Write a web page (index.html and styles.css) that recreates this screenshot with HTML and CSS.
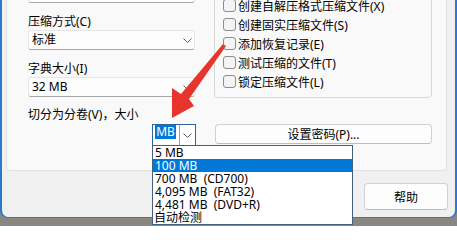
FILE: index.html
```html
<!DOCTYPE html>
<html lang="zh-CN">
<head>
<meta charset="utf-8">
<title>压缩选项</title>
<link rel="stylesheet" href="styles.css">
</head>
<body>
<div class="screen">
  <div class="window">
    <div class="panel">
      <div class="cols">
        <div class="left">
          <div class="field"></div>
          <div class="label">压缩方式(C)</div>
          <div class="field"><span class="val">标准</span><svg class="chev" width="9" height="5" viewBox="0 0 9 5"><path d="M0.5 0.5 L4.5 4.5 L8.5 0.5" fill="none" stroke="#5f5f5f" stroke-width="1"/></svg></div>
          <div class="label">字典大小(I)</div>
          <div class="field"><span class="val">32 MB</span><svg class="chev" width="9" height="5" viewBox="0 0 9 5"><path d="M0.5 0.5 L4.5 4.5 L8.5 0.5" fill="none" stroke="#5f5f5f" stroke-width="1"/></svg></div>
        </div>
        <div class="group">
          <div class="check"><span class="box"></span>创建自解压格式压缩文件(X)</div>
          <div class="check"><span class="box"></span>创建固实压缩文件(S)</div>
          <div class="check"><span class="box"></span>添加恢复记录(E)</div>
          <div class="check"><span class="box"></span>测试压缩的文件(T)</div>
          <div class="check"><span class="box"></span>锁定压缩文件(L)</div>
        </div>
      </div>
      <div class="label split">切分为分卷(V)，大小</div>
      <div class="row">
        <div class="combo">
          <span class="sel">MB</span>
          <span class="drop"><svg width="9" height="5" viewBox="0 0 9 5"><path d="M0.5 0.5 L4.5 4.5 L8.5 0.5" fill="none" stroke="#555" stroke-width="1"/></svg></span>
        </div>
        <div class="btn pwd">设置密码(P)...</div>
      </div>
    </div>
    <div class="footer">
      <div class="btn help">帮助</div>
    </div>
  </div>
  <ul class="list">
    <li>5 MB</li>
    <li class="hl">100 MB</li>
    <li>700 MB  (CD700)</li>
    <li>4,095 MB  (FAT32)</li>
    <li>4,481 MB  (DVD+R)</li>
    <li class="auto">自动检测</li>
  </ul>
  <svg class="arrow" width="457" height="226" viewBox="0 0 457 226">
    <polygon points="223,44 226,46 189,99 194,106 172,118 172,88 181,94" fill="#e6352d"/>
  </svg>
</div>
</body>
</html>
```
FILE: styles.css
```css
* { box-sizing: border-box; }
html, body { margin: 0; padding: 0; }
body {
  font-family: "Noto Sans", "Noto Sans CJK SC", sans-serif;
  font-size: 12px;
  color: #000;
}
.screen {
  position: relative;
  width: 457px;
  height: 226px;
  overflow: hidden;
  background: #8a8682;
}
.window {
  display: flex;
  flex-direction: column;
  width: 457px;
  background: #f0f0f0;
  border-left: 2px solid #2a78d0;
  border-right: 2px solid #2a78d0;
  border-bottom: 1px solid #2a78d0;
  border-radius: 0 0 8px 8px;
}
.panel {
  margin: -20px 0 0 4px;
  width: 441px;
  padding: 2px 0 24px 21px;
  background: #f9f9f9;
  border: 1px solid #e0e0e0;
  border-radius: 0 0 4px 4px;
}
.cols {
  display: grid;
  grid-template-columns: 167px 218px;
  column-gap: 19px;
  align-items: start;
}
.label {
  margin-top: 10px;
  line-height: 17px;
  height: 17px;
  white-space: nowrap;
}
.field {
  display: flex;
  align-items: center;
  height: 20px;
  padding: 0 2px 0 3px;
  background: #fdfdfd;
  border: 1px solid #e6e6e6;
  border-bottom-color: #a8a8a8;
  border-radius: 3px;
  line-height: 18px;
}
.field .val { flex: 1; }
.field .chev { flex: none; }
.group {
  padding: 12px 0 6px 8px;
  border: 1px solid #d8d8d8;
  border-radius: 4px;
}
.check {
  display: flex;
  align-items: center;
  height: 19px;
  white-space: nowrap;
}
.box {
  width: 13px;
  height: 13px;
  margin-right: 2px;
  background: #f4f4f4;
  border: 1px solid #8c8c8c;
  border-radius: 3px;
  flex: none;
}
.split { margin-top: 8px; }
.row {
  display: flex;
  align-items: flex-start;
  margin-top: 1px;
}
.combo {
  display: flex;
  align-items: flex-start;
  width: 44px;
  height: 22px;
  margin-left: 124px;
  background: #fff;
  border: 1px solid #2f6198;
}
.sel {
  width: 21px;
  height: 14px;
  margin-left: 2px;
  background: #0078d7;
  color: #fff;
  line-height: 14px;
  text-align: center;
}
.drop {
  display: flex;
  align-items: center;
  justify-content: center;
  width: 16px;
  height: 20px;
  margin-left: auto;
  border-left: 1px solid #8aa4c0;
}
.btn {
  display: flex;
  align-items: center;
  justify-content: center;
  background: #fdfdfd;
  border: 1px solid #d0d0d0;
  border-bottom-color: #bdbdbd;
  border-radius: 4px;
}
.pwd {
  width: 217px;
  height: 20px;
  margin-left: 19px;
}
.footer {
  display: flex;
  justify-content: flex-end;
  padding: 12px 7px 7px 0;
}
.help {
  width: 84px;
  height: 27px;
}
.list {
  position: absolute;
  left: 152px;
  top: 145px;
  width: 201px;
  margin: 0;
  padding: 0;
  list-style: none;
  background: #fff;
  border: 1px solid #43617f;
}
.list li {
  height: 13px;
  line-height: 13px;
  padding-left: 2px;
  white-space: pre;
}
.list li.hl {
  background: #0078d7;
  color: #fff;
}
.list li.auto { padding-left: 1px; }
.arrow {
  position: absolute;
  left: 0;
  top: 0;
  pointer-events: none;
}
```
